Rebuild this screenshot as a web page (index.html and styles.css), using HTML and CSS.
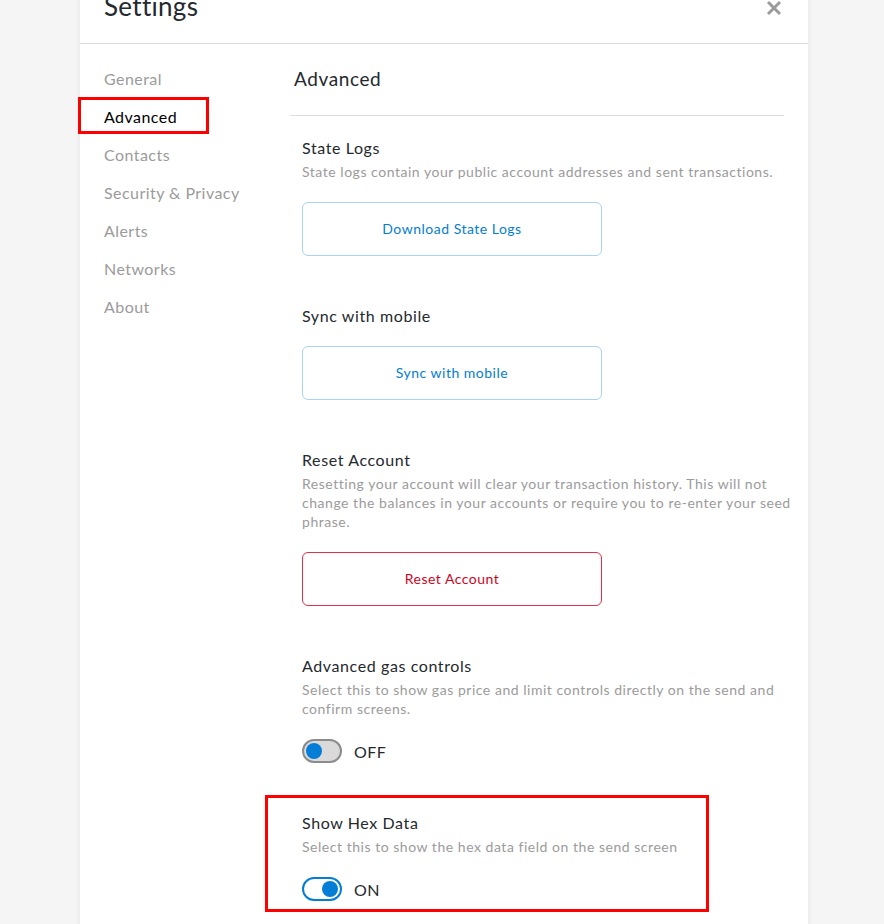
FILE: index.html
```html
<!DOCTYPE html>
<html lang="en">
<head>
    <meta charset="UTF-8">
    <meta name="viewport" content="width=device-width, initial-scale=1.0">
    <title>Settings</title>
    <link rel="stylesheet" href="styles.css">
</head>
<body>

    <div class="settings-page">
        <header class="settings-header">
            <h1>Settings</h1>
            <button class="close-button" aria-label="Close">
                <svg width="16" height="16" viewBox="0 0 16 16">
                    <path d="M2 2 L14 14 M14 2 L2 14" stroke="#9b9b9b" stroke-width="3"/>
                </svg>
            </button>
        </header>

        <div class="settings-main">
            <nav class="settings-tabs">
                <div class="tab">General</div>
                <div class="tab active">Advanced<span class="mark mark-tab"></span></div>
                <div class="tab">Contacts</div>
                <div class="tab">Security &amp; Privacy</div>
                <div class="tab">Alerts</div>
                <div class="tab">Networks</div>
                <div class="tab">About</div>
            </nav>

            <div class="settings-content">
                <h2 class="content-title">Advanced</h2>

                <div class="setting">
                    <div class="setting-title">State Logs</div>
                    <div class="setting-desc">State logs contain your public account addresses and sent transactions.</div>
                    <button class="button">Download State Logs</button>
                </div>

                <div class="setting">
                    <div class="setting-title">Sync with mobile</div>
                    <button class="button">Sync with mobile</button>
                </div>

                <div class="setting">
                    <div class="setting-title">Reset Account</div>
                    <div class="setting-desc">Resetting your account will clear your transaction history. This will not change the balances in your accounts or require you to re-enter your seed phrase.</div>
                    <button class="button button-danger">Reset Account</button>
                </div>

                <div class="setting">
                    <div class="setting-title">Advanced gas controls</div>
                    <div class="setting-desc">Select this to show gas price and limit controls directly on the send and confirm screens.</div>
                    <div class="toggle-row">
                        <span class="toggle"><span class="knob"></span></span>
                        <span class="toggle-label">OFF</span>
                    </div>
                </div>

                <div class="setting">
                    <span class="mark mark-hex"></span>
                    <div class="setting-title">Show Hex Data</div>
                    <div class="setting-desc">Select this to show the hex data field on the send screen</div>
                    <div class="toggle-row">
                        <span class="toggle on"><span class="knob"></span></span>
                        <span class="toggle-label">ON</span>
                    </div>
                </div>
            </div>
        </div>
    </div>

</body>
</html>
```

FILE: styles.css
```css
body {
    font-family: Lato, "Noto Sans", sans-serif;
    background-color: #f5f5f5;
    margin: 0;
    padding: 0;
    overflow: hidden;
}
.settings-page {
    width: 728px;
    margin: -31px 0 0 80px;
    min-height: 1000px;
    background-color: white;
    box-shadow: 0 0 6px rgba(0, 0, 0, 0.08);
}
.settings-header {
    display: flex;
    justify-content: space-between;
    align-items: center;
    height: 74px;
    padding: 0 26px 0 24px;
    border-bottom: 1px solid #dedede;
}
.settings-header h1 {
    margin: 0;
    font-size: 26px;
    font-weight: 400;
    letter-spacing: 0.3px;
    color: #24292e;
}
.close-button {
    border: none;
    background: none;
    padding: 0;
    margin-top: 4px;
    width: 16px;
    height: 16px;
}
.settings-main {
    display: flex;
}
.settings-tabs {
    width: 210px;
    padding-top: 16px;
    flex-shrink: 0;
}
.tab {
    position: relative;
    height: 38px;
    line-height: 38px;
    padding-left: 24px;
    font-size: 16px;
    letter-spacing: 0.45px;
    color: #9b9b9b;
}
.tab.active {
    color: #000;
}
.settings-content {
    width: 494px;
}
.content-title {
    margin: 0;
    padding: 23px 0 24px 4px;
    font-size: 19px;
    line-height: 24px;
    font-weight: 400;
    letter-spacing: 0.6px;
    color: #24292e;
    border-bottom: 1px solid #dedede;
}
.setting {
    position: relative;
    margin: 22px -12px 0 12px;
}
.setting + .setting {
    margin-top: 50px;
}
.setting-title {
    font-size: 16px;
    line-height: 20px;
    letter-spacing: 0.6px;
    color: #24292e;
}
.setting-desc {
    margin-top: 4px;
    font-size: 14px;
    line-height: 19px;
    letter-spacing: 0.53px;
    color: #9b9b9b;
}
.button {
    display: block;
    width: 300px;
    height: 54px;
    margin-top: 21px;
    padding-bottom: 2px;
    font-family: inherit;
    font-size: 14px;
    letter-spacing: 0.5px;
    color: #037dd6;
    background-color: white;
    border: 1px solid #a8d3f5;
    border-radius: 6px;
}
.setting-title + .button {
    margin-top: 20px;
}
.button-danger {
    color: #d0021b;
    border-color: #e0304a;
}
.toggle-row {
    display: flex;
    align-items: center;
    margin-top: 21px;
}
.toggle {
    position: relative;
    box-sizing: border-box;
    width: 40px;
    height: 24px;
    border: 2px solid #8c8c8c;
    border-radius: 12px;
    background-color: #dadada;
}
.toggle .knob {
    position: absolute;
    top: 2px;
    left: 2px;
    width: 16px;
    height: 16px;
    border-radius: 50%;
    background-color: #037dd6;
}
.toggle.on {
    border-color: #037dd6;
    background-color: white;
}
.toggle.on .knob {
    left: auto;
    right: 2px;
}
.toggle-label {
    margin-left: 12px;
    font-size: 16px;
    letter-spacing: 0.4px;
    color: #24292e;
}
.mark {
    position: absolute;
    border: 3px solid #f00;
    pointer-events: none;
}
.mark-tab {
    left: -2px;
    top: -1px;
    width: 125px;
    height: 31px;
}
.mark-hex {
    left: -37px;
    top: -18px;
    width: 438px;
    height: 111px;
}
```
